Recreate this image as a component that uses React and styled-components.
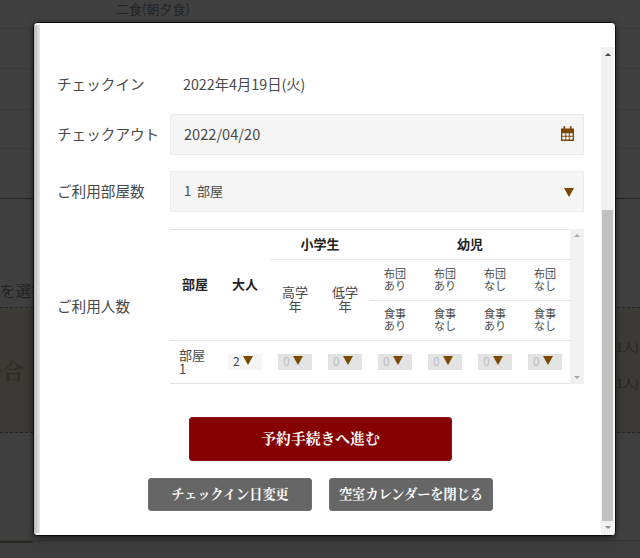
import React from 'react';
import styled, { createGlobalStyle } from 'styled-components';

const sansStack = '"Noto Sans CJK JP", "Noto Sans", sans-serif';
const serifStack = '"Noto Serif CJK JP", "Noto Sans CJK JP", serif';

const GlobalStyle = createGlobalStyle`
  html, body {
    margin: 0;
    padding: 0;
    background: #404040;
  }
  * {
    box-sizing: border-box;
  }
  body {
    font-family: ${sansStack};
    overflow: hidden;
  }
`;

const childColumns = [
  ['布団', 'あり', '食事', 'あり'],
  ['布団', 'あり', '食事', 'なし'],
  ['布団', 'なし', '食事', 'あり'],
  ['布団', 'なし', '食事', 'なし'],
];

const CalendarIcon = () => (
  <svg width="13" height="15" viewBox="0 0 13 15">
    <path
      fill="#7b4800"
      fillRule="evenodd"
      d="M0 2.5h2.4V1a.9.9 0 0 1 1.8 0v1.5h4.6V1a.9.9 0 0 1 1.8 0v1.5H13V15H0zM1.3 7.2v2.6h3V7.2zm3.9 0v2.6h2.6V7.2zm3.5 0v2.6h3V7.2zM1.3 10.8v2.8h3v-2.8zm3.9 0v2.8h2.6v-2.8zm3.5 0v2.8h3v-2.8z"
    />
  </svg>
);

const App = () => (
  <Page>
    <GlobalStyle />
    <MealRow>二食(朝夕食)</MealRow>
    <PlainRow $height={40} />
    <PlainRow $height={41} />
    <PlainRow $height={39} />
    <PlainRow $height={50} $strong />
    <SelectText>を選択</SelectText>
    <PlanArea>
      <PlanTitle>場合</PlanTitle>
      <PriceList>
        <span>(1人)</span>
        <span>(1人)</span>
      </PriceList>
    </PlanArea>
    <BottomBand />
    <FooterBand>
      <FooterTab />
    </FooterBand>

    <Modal>
      <SideStrip />
      <ModalBody>
        <FormRow>
          <FieldLabel>チェックイン</FieldLabel>
          <StaticValue>2022年4月19日(火)</StaticValue>
        </FormRow>
        <FormRow>
          <FieldLabel>チェックアウト</FieldLabel>
          <FieldBox>
            <FieldValue $size={14.6}>2022/04/20</FieldValue>
            <IconSlot $shift={-1}>
              <CalendarIcon />
            </IconSlot>
          </FieldBox>
        </FormRow>
        <FormRow>
          <FieldLabel>ご利用部屋数</FieldLabel>
          <FieldBox>
            <FieldValue $size={13}>1&nbsp;&nbsp;部屋</FieldValue>
            <IconSlot $shift={1}>
              <Triangle $width={5} $height={9} />
            </IconSlot>
          </FieldBox>
        </FormRow>
        <GuestRow>
          <FieldLabel>ご利用人数</FieldLabel>
          <TableWrap>
            <GuestTable>
              <thead>
                <tr>
                  <HeadCell rowSpan={3}>部屋</HeadCell>
                  <HeadCell rowSpan={3}>大人</HeadCell>
                  <GroupCell colSpan={2}>小学生</GroupCell>
                  <GroupCell colSpan={4}>幼児</GroupCell>
                </tr>
                <tr>
                  <GradeCell rowSpan={2}>高学年</GradeCell>
                  <GradeCell rowSpan={2}>低学年</GradeCell>
                  {childColumns.map((col, i) => (
                    <OptionCell key={i} $height={41}>
                      {col[0]}
                      <br />
                      {col[1]}
                    </OptionCell>
                  ))}
                </tr>
                <tr>
                  {childColumns.map((col, i) => (
                    <OptionCell key={i} $height={40}>
                      {col[2]}
                      <br />
                      {col[3]}
                    </OptionCell>
                  ))}
                </tr>
              </thead>
              <tbody>
                <tr>
                  <RoomCell>部屋1</RoomCell>
                  <CountCell>
                    <MiniSelect>
                      2<Triangle $width={5} $height={9} />
                    </MiniSelect>
                  </CountCell>
                  {[0, 1, 2, 3, 4, 5].map((i) => (
                    <CountCell key={i}>
                      <MiniSelect $disabled>
                        0<Triangle $width={5} $height={9} />
                      </MiniSelect>
                    </CountCell>
                  ))}
                </tr>
              </tbody>
            </GuestTable>
            <TableTrack>
              <ArrowUp $color="#a8a8a8" />
              <ArrowDown $color="#a8a8a8" />
            </TableTrack>
          </TableWrap>
        </GuestRow>
        <PrimaryButton>予約手続きへ進む</PrimaryButton>
        <ButtonRow>
          <SubButton>チェックイン日変更</SubButton>
          <SubButton>空室カレンダーを閉じる</SubButton>
        </ButtonRow>
      </ModalBody>
      <ModalTrack>
        <TrackEnd $height={14}>
          <ArrowUp $color="#444" />
        </TrackEnd>
        <TrackGap />
        <TrackThumb />
        <TrackEnd $height={13}>
          <ArrowDown $color="#8a8a8a" />
        </TrackEnd>
      </ModalTrack>
    </Modal>
  </Page>
);

const Page = styled.div`
  position: relative;
  width: 640px;
  height: 558px;
  overflow: hidden;
  background: #404040;
  color: #232323;
`;

const PlainRow = styled.div`
  height: ${(p) => p.$height}px;
  border-bottom: 1px solid ${(p) => (p.$strong ? '#242424' : '#3a3a3a')};
`;

const MealRow = styled.div`
  height: 29px;
  padding: 0 0 0 116px;
  font-size: 13px;
  line-height: 17px;
  border-bottom: 1px solid #3a3a3a;
`;

const SelectText = styled.div`
  height: 109px;
  padding-top: 81px;
  font-size: 15.5px;
  line-height: 20px;
  border-bottom: 1px dashed #242424;
`;

const PlanArea = styled.div`
  display: flex;
  justify-content: space-between;
  height: 125px;
  background: #3c3a36;
  border-bottom: 1px dashed #242424;
`;

const PlanTitle = styled.div`
  margin: 46px 0 0 -20px;
  font-family: ${serifStack};
  font-size: 22px;
  line-height: 32px;
  font-weight: 700;
  color: #2f2d29;
`;

const PriceList = styled.div`
  display: flex;
  flex-direction: column;
  gap: 18px;
  padding: 30px 0 0;
  width: 28px;
  font-size: 12px;
  line-height: 18px;
  white-space: nowrap;
`;

const BottomBand = styled.div`
  height: 108px;
  border-bottom: 1px solid #363636;
`;

const FooterBand = styled.div`
  height: 17px;
  background: #3c3c3c;
`;

const FooterTab = styled.div`
  width: 33px;
  height: 2px;
  background: #2b2723;
`;

const Modal = styled.div`
  position: absolute;
  left: 33px;
  top: 22px;
  display: flex;
  width: 583px;
  height: 514px;
  padding-right: 1px;
  background: #fff;
  border: 1px solid #0d0d0d;
  border-radius: 4px;
  box-shadow: 0 2px 6px rgba(0, 0, 0, 0.55);
`;

const SideStrip = styled.div`
  flex: 0 0 6px;
  margin: 2px 0;
  background: linear-gradient(to right, #b9b9b9, #e6e6e6);
`;

const ModalBody = styled.div`
  flex: 0 0 561px;
  display: flex;
  flex-direction: column;
  padding: 49px 17px 0;
  gap: 16px;
`;

const FormRow = styled.div`
  display: flex;
  align-items: center;
  color: #484848;
`;

const GuestRow = styled(FormRow)`
  margin-top: 1px;
`;

const FieldLabel = styled.div`
  flex: 0 0 113px;
  padding-bottom: 2px;
  font-size: 14.6px;
  line-height: 24px;
  white-space: nowrap;
`;

const StaticValue = styled.div`
  padding: 0 0 2px 13px;
  font-size: 14.3px;
  line-height: 24px;
`;

const FieldBox = styled.div`
  flex: 1;
  display: flex;
  align-items: center;
  justify-content: space-between;
  height: 41px;
  padding: 0 9px 0 13px;
  background: #f5f5f5;
  border: 1px solid #ececec;
`;

const FieldValue = styled.span`
  padding-bottom: 3px;
  font-size: ${(p) => p.$size}px;
`;

const IconSlot = styled.span`
  display: flex;
  margin-top: ${(p) => (p.$shift > 0 ? p.$shift * 2 : 0)}px;
  margin-bottom: ${(p) => (p.$shift < 0 ? -p.$shift * 2 : 0)}px;
`;

const Triangle = styled.i`
  display: block;
  flex: none;
  width: 0;
  height: 0;
  border-left: ${(p) => p.$width}px solid transparent;
  border-right: ${(p) => p.$width}px solid transparent;
  border-top: ${(p) => p.$height}px solid #7b4800;
`;

const TableWrap = styled.div`
  flex: 1;
  display: flex;
`;

const GuestTable = styled.table`
  width: 400px;
  table-layout: fixed;
  border-collapse: separate;
  border-spacing: 0;
  border-top: 1px solid #e3e3e3;
  color: #484848;
`;

const HeadCell = styled.th`
  width: 50px;
  padding: 0 0 4px;
  font-size: 13px;
  font-weight: 700;
  color: #222;
  border-bottom: 1px solid #e3e3e3;
`;

const GroupCell = styled.th`
  height: 30px;
  padding: 0 0 2px;
  font-size: 13px;
  font-weight: 700;
  color: #222;
  border-bottom: 1px solid #e3e3e3;
`;

const GradeCell = styled.th`
  padding: 0 11px 2px;
  font-size: 13px;
  font-weight: 400;
  line-height: 14px;
  border-bottom: 1px solid #e3e3e3;
`;

const OptionCell = styled.th`
  height: ${(p) => p.$height}px;
  padding: 0 0 3px;
  font-size: 11px;
  font-weight: 400;
  line-height: 12px;
  border-bottom: 1px solid #e3e3e3;
`;

const RoomCell = styled.td`
  height: 43px;
  padding: 0 13px 1px 9px;
  font-size: 13px;
  line-height: 13.5px;
  border-bottom: 1px solid #e3e3e3;
`;

const CountCell = styled.td`
  padding: 0 0 1px;
  border-bottom: 1px solid #e3e3e3;
`;

const MiniSelect = styled.div`
  display: flex;
  align-items: center;
  justify-content: space-between;
  width: 34px;
  height: 16px;
  margin: 0 auto;
  padding: 0 9px 2px 5px;
  font-size: 12px;
  line-height: 14px;
  color: ${(p) => (p.$disabled ? '#bdbdbd' : '#444')};
  background: ${(p) => (p.$disabled ? '#e3e3e3' : '#f5f5f5')};
`;

const TableTrack = styled.div`
  flex: 0 0 14px;
  display: flex;
  flex-direction: column;
  justify-content: space-between;
  align-items: center;
  padding: 5px 0;
  background: #f1f1f1;
`;

const ArrowUp = styled.i`
  width: 0;
  height: 0;
  border-left: 3.5px solid transparent;
  border-right: 3.5px solid transparent;
  border-bottom: 3.5px solid ${(p) => p.$color};
`;

const ArrowDown = styled.i`
  width: 0;
  height: 0;
  border-left: 3.5px solid transparent;
  border-right: 3.5px solid transparent;
  border-top: 3.5px solid ${(p) => p.$color};
`;

const PrimaryButton = styled.button`
  align-self: center;
  width: 263px;
  height: 44px;
  margin-top: 17px;
  padding: 0 0 3px;
  font-family: ${serifStack};
  font-size: 14.8px;
  font-weight: 700;
  color: #fff;
  background: #850000;
  border: 1px solid #8f1010;
  border-radius: 3px;
`;

const ButtonRow = styled.div`
  display: flex;
  justify-content: center;
  gap: 17px;
  margin-top: 1px;
`;

const SubButton = styled.button`
  width: 164px;
  height: 33px;
  padding: 0 0 3px;
  font-family: ${serifStack};
  font-size: 13.2px;
  font-weight: 700;
  color: #fff;
  background: #666;
  border: 1px solid #6e6e6e;
  border-radius: 3px;
`;

const ModalTrack = styled.div`
  flex: 0 0 13px;
  display: flex;
  flex-direction: column;
  margin-top: 24px;
  background: #f1f1f1;
`;

const TrackEnd = styled.div`
  flex: 0 0 ${(p) => p.$height}px;
  display: flex;
  align-items: center;
  justify-content: center;
`;

const TrackGap = styled.div`
  flex: 0 0 149px;
`;

const TrackThumb = styled.div`
  flex: 0 0 311px;
  margin: 0 1px;
  background: #c1c1c1;
`;

export default App;
